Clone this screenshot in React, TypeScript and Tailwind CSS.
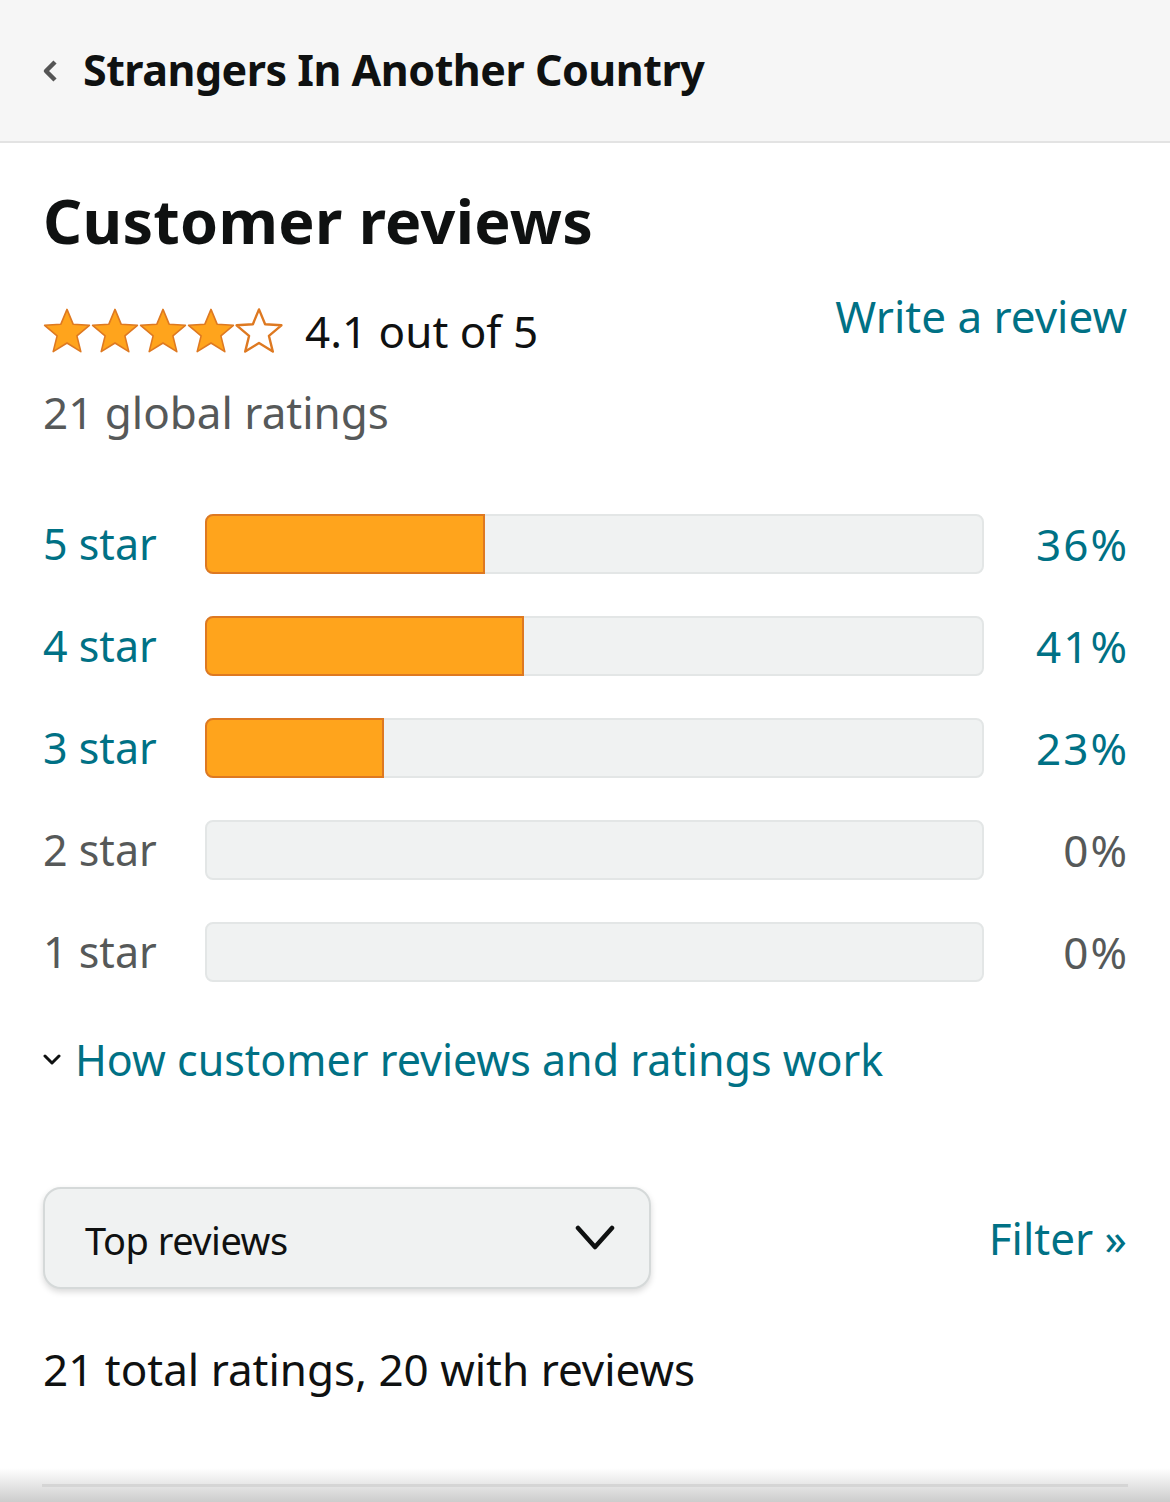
const ratings = [
  { label: '5 star', pct: 36 },
  { label: '4 star', pct: 41 },
  { label: '3 star', pct: 23 },
  { label: '2 star', pct: 0 },
  { label: '1 star', pct: 0 },
];

const BAR_WIDTH = 779;

function Star({ filled }: { filled: boolean }) {
  return (
    <svg viewBox="0 0 24 24" className="size-[48px]">
      <path
        d="M12 1.2L15.06 8.59L23.2 9.15L16.95 14.41L18.9 22.3L12 18L5.1 22.3L7.05 14.41L0.8 9.15L8.94 8.59Z"
        fill={filled ? '#ffa41c' : '#fff'}
        stroke="#de7921"
        strokeWidth={filled ? 0.8 : 1.2}
        strokeLinejoin="round"
      />
    </svg>
  );
}

export default function App() {
  return (
    <div className="relative min-h-[1502px] w-[1170px] overflow-hidden bg-white font-['Noto_Sans',sans-serif]">
      <header className="flex h-[143px] items-center gap-[25px] border-b-2 border-[#e3e3e3] bg-[#f6f6f6] pl-[42px]">
        <svg viewBox="0 0 16 24" className="h-[24px] w-[16px]">
          <polyline
            points="13,3 4,12 13,21"
            fill="none"
            stroke="#555"
            strokeWidth={4.5}
            strokeLinejoin="round"
          />
        </svg>
        <h1 className="text-[43px] font-bold tracking-[-0.5px] text-[#0f1111]">
          Strangers In Another Country
        </h1>
      </header>

      <main className="px-[43px]">
        <h2 className="mt-[38px] text-[61px] font-bold leading-[80px] tracking-[0.3px] text-[#0f1111]">
          Customer reviews
        </h2>

        <div className="flex items-start justify-between">
          <div className="mt-[42px] flex h-[56px] items-center gap-[22px]">
            <div className="flex">
              {[0, 1, 2, 3, 4].map((i) => (
                <Star key={i} filled={i < 4} />
              ))}
            </div>
            <span className="text-[44px] leading-[56px] text-[#0f1111]">4.1 out of 5</span>
          </div>
          <a className="mt-[27px] text-[44px] leading-[56px] text-[#007185]">Write a review</a>
        </div>

        <p className="mt-[25px] text-[44px] leading-[56px] text-[#565959]">21 global ratings</p>

        <div className="mt-[74px] flex flex-col gap-[42px]">
          {ratings.map((r) => (
            <div key={r.label} className="flex h-[60px] items-center">
              <span
                className={`w-[162px] text-[43px] ${r.pct > 0 ? 'text-[#007185]' : 'text-[#565959]'}`}
              >
                {r.label}
              </span>
              <div className="relative h-[60px] w-[779px] rounded-[8px] border-2 border-[#e3e6e6] bg-[#f0f2f2]">
                {r.pct > 0 && (
                  <div
                    className="absolute -left-[2px] -top-[2px] h-[60px] rounded-l-[8px] border-2 border-[#de7921] bg-[#ffa41c]"
                    style={{ width: `${(r.pct / 100) * BAR_WIDTH}px` }}
                  />
                )}
              </div>
              <span
                className={`-mr-[2px] flex-1 text-right text-[44px] tracking-[2px] ${r.pct > 0 ? 'text-[#007185]' : 'text-[#565959]'}`}
              >
                {r.pct}%
              </span>
            </div>
          ))}
        </div>

        <div className="mt-[50px] flex items-center gap-[13px]">
          <svg viewBox="0 0 20 12" className="-ml-[1px] h-[12px] w-[20px]">
            <polyline
              points="3,2 10,9 17,2"
              fill="none"
              stroke="#0f1111"
              strokeWidth={3}
              strokeLinecap="round"
              strokeLinejoin="round"
            />
          </svg>
          <span className="text-[43px] leading-[56px] text-[#007185]">
            How customer reviews and ratings work
          </span>
        </div>

        <div className="mt-[99px] flex items-center justify-between">
          <div className="flex h-[102px] w-[608px] items-center justify-between rounded-[18px] border-2 border-[#d5d9d9] bg-[#f0f2f2] pl-[40px] pr-[34px] pt-[4px] shadow-[0_3px_6px_rgba(0,0,0,0.15)]">
            <span className="text-[38px] tracking-[-0.5px] text-[#0f1111]">Top reviews</span>
            <svg viewBox="0 0 40 28" className="-mt-[4px] h-[28px] w-[40px]">
              <polyline
                points="3,4 20,23 37,4"
                fill="none"
                stroke="#0f1111"
                strokeWidth={4.5}
                strokeLinecap="round"
                strokeLinejoin="round"
              />
            </svg>
          </div>
          <a className="text-[44px] text-[#007185]">Filter »</a>
        </div>

        <p className="mt-[52px] text-[44px] leading-[56px] text-[#0f1111]">
          21 total ratings, 20 with reviews
        </p>
      </main>

      <div className="absolute inset-x-0 bottom-0 h-[34px] bg-gradient-to-b from-transparent to-[#cccccc]" />
      <div className="absolute bottom-[15px] left-[42px] right-[42px] h-[3px] bg-[#d5d5d5]" />
    </div>
  );
}
